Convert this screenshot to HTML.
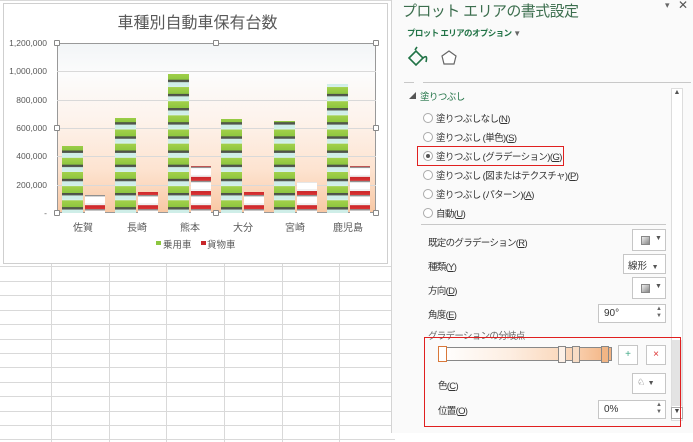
<!DOCTYPE html>
<html><head><meta charset="utf-8">
<style>
*{margin:0;padding:0;box-sizing:border-box}
body{width:693px;height:442px;overflow:hidden;background:#fff;position:relative;font-family:"Liberation Sans","Noto Sans CJK JP",sans-serif;color:#444}
.abs{position:absolute}
.hl{position:absolute;left:0;width:395px;height:1px;background:#d9d9d9}
.vl{position:absolute;top:264px;width:1px;height:178px;background:#d9d9d9}
.car{position:absolute;width:21px;background:linear-gradient(to bottom,#d6f0ec 0,#d6f0ec 12%,#a3d04a 12%,#8cc63f 60%,#4a4f45 60%,#5a5f55 76%,#cfeee8 76%) bottom/21px 14.17px repeat-y}
.trk{position:absolute;width:20px;background:linear-gradient(to bottom,#fff 0,#fff 30%,#ececec 30%,#f2f2f2 45%,#c8262a 45%,#d33 72%,#888 72%,#999 82%,#fff 82%) bottom/20px 14.17px repeat-y}
.yl{position:absolute;right:646px;font-size:8.5px;color:#595959;text-align:right}
.xl{position:absolute;top:219px;font-size:10px;color:#595959;width:54px;text-align:center}
.gl{position:absolute;left:57px;width:319px;height:1px;background:#d9d9d9}
.h{position:absolute;width:6px;height:6px;border:1px solid #888;background:#fff;border-radius:1px}
.rad{position:absolute;left:423px;width:10px;height:10px;border:1px solid #aaa;border-radius:50%;background:#fff}
.opt{position:absolute;left:436px;font-size:9.5px;letter-spacing:-0.6px;color:#333}
.lab{position:absolute;left:428px;font-size:9.5px;letter-spacing:-0.7px;color:#333}
.box{position:absolute;border:1px solid #c6c6c6;background:#fff}
</style></head><body>
<div class="hl" style="top:266px"></div><div class="hl" style="top:281px"></div><div class="hl" style="top:295px"></div><div class="hl" style="top:310px"></div><div class="hl" style="top:324px"></div><div class="hl" style="top:339px"></div><div class="hl" style="top:353px"></div><div class="hl" style="top:367px"></div><div class="hl" style="top:382px"></div><div class="hl" style="top:396px"></div><div class="hl" style="top:411px"></div><div class="hl" style="top:425px"></div><div class="hl" style="top:439px"></div>
<div class="vl" style="left:51px"></div><div class="vl" style="left:109px"></div><div class="vl" style="left:166px"></div><div class="vl" style="left:224px"></div><div class="vl" style="left:282px"></div><div class="vl" style="left:339px"></div>
<div class="abs" style="left:3px;top:3px;width:385px;height:261px;border:1px solid #cfcfcf;background:#fff"></div>
<div class="abs" style="left:0;top:0;width:395px;height:1px;background:#d9d9d9"></div>
<div class="abs" style="left:0;width:395px;text-align:center;top:9px;font-size:16px;color:#595959">車種別自動車保有台数</div>
<div class="abs" style="left:57px;top:43px;width:319px;height:170px;background:linear-gradient(to bottom,#f2f5f7 0%,#fcfcfc 18%,#fdf3ec 45%,#fde3d0 75%,#f8c8a4 100%);border:1px solid #999"></div>
<div class="gl" style="top:71px"></div><div class="gl" style="top:100px"></div><div class="gl" style="top:128px"></div><div class="gl" style="top:156px"></div><div class="gl" style="top:185px"></div>
<div class="yl" style="top:38px">1,200,000</div>
<div class="yl" style="top:66px">1,000,000</div>
<div class="yl" style="top:95px">800,000</div>
<div class="yl" style="top:123px">600,000</div>
<div class="yl" style="top:151px">400,000</div>
<div class="yl" style="top:180px">200,000</div>
<div class="yl" style="top:208px">-</div>
<div class="car" style="left:62px;top:146px;height:67px"></div><div class="trk" style="left:85px;top:195px;height:18px"></div>
<div class="car" style="left:115px;top:118px;height:95px"></div><div class="trk" style="left:138px;top:192px;height:21px"></div>
<div class="car" style="left:168px;top:74px;height:139px"></div><div class="trk" style="left:191px;top:166px;height:47px"></div>
<div class="car" style="left:221px;top:119px;height:94px"></div><div class="trk" style="left:244px;top:192px;height:21px"></div>
<div class="car" style="left:274px;top:121px;height:92px"></div><div class="trk" style="left:297px;top:182px;height:31px"></div>
<div class="car" style="left:327px;top:84px;height:129px"></div><div class="trk" style="left:350px;top:166px;height:47px"></div>
<div class="xl" style="left:56px">佐賀</div><div class="xl" style="left:110px">長崎</div><div class="xl" style="left:163px">熊本</div><div class="xl" style="left:216px">大分</div><div class="xl" style="left:268px">宮崎</div><div class="xl" style="left:321px">鹿児島</div>
<div class="abs" style="left:156px;top:241px;width:5px;height:4px;background:#8cc63f"></div>
<div class="abs" style="left:163px;top:237px;font-size:9.5px;color:#595959">乗用車</div>
<div class="abs" style="left:201px;top:241px;width:5px;height:4px;background:#c8262a"></div>
<div class="abs" style="left:207px;top:237px;font-size:9.5px;color:#595959">貨物車</div>
<div class="h" style="left:54px;top:40px"></div><div class="h" style="left:213px;top:40px"></div><div class="h" style="left:373px;top:40px"></div>
<div class="h" style="left:54px;top:125px"></div><div class="h" style="left:373px;top:125px"></div>
<div class="h" style="left:54px;top:210px"></div><div class="h" style="left:213px;top:210px"></div><div class="h" style="left:373px;top:210px"></div>
<!-- panel -->
<div class="abs" style="left:391px;top:0;width:302px;height:433px;background:#fafafa;border-left:1px solid #d4d4d4"></div>
<div class="abs" style="left:402px;top:0;font-size:15px;letter-spacing:-0.6px;color:#3c6e4e">プロット エリアの書式設定</div>
<div class="abs" style="left:665px;top:0;font-size:9px;color:#666">▾</div>
<div class="abs" style="left:678px;top:-2px;font-size:12px;color:#555">✕</div>
<div class="abs" style="left:407px;top:27px;font-size:8.5px;letter-spacing:-0.6px;color:#217346;font-weight:bold">プロット エリアのオプション <span style="color:#666;font-size:8px">▼</span></div>
<svg class="abs" style="left:406px;top:46px" width="60" height="22"><path d="M3 12 L10 5 L17 12 L10 19 Z" fill="none" stroke="#217346" stroke-width="1.6"/><path d="M9 4 L11 1 M17 12 q5 -4 3 4" stroke="#217346" stroke-width="1.6" fill="none"/><path d="M43 5 L50 10 L48 18 L38 18 L36 10 Z" fill="#fff" stroke="#666" stroke-width="1.2"/></svg>
<div class="abs" style="left:404px;top:82px;width:287px;height:1px;background:#c8c8c8"></div>
<div class="abs" style="left:414px;top:77px;width:9px;height:6px;background:#fafafa"></div>
<div class="abs" style="left:409px;top:91px;font-size:7px;color:#555">◢</div>
<div class="abs" style="left:420px;top:89px;font-size:9.5px;letter-spacing:-0.6px;color:#217346">塗りつぶし</div>
<div class="rad" style="top:113px"></div><div class="opt" style="top:111px">塗りつぶしなし(<u>N</u>)</div>
<div class="rad" style="top:132px"></div><div class="opt" style="top:130px">塗りつぶし (単色)(<u>S</u>)</div>
<div class="rad" style="top:151px"><div style="width:4px;height:4px;background:#555;border-radius:50%;margin:2px"></div></div><div class="opt" style="top:149px">塗りつぶし (グラデーション)(<u>G</u>)</div>
<div class="abs" style="left:417px;top:146px;width:147px;height:20px;border:1.5px solid #e02020"></div>
<div class="rad" style="top:170px"></div><div class="opt" style="top:168px">塗りつぶし (図またはテクスチャ)(<u>P</u>)</div>
<div class="rad" style="top:189px"></div><div class="opt" style="top:187px">塗りつぶし (パターン)(<u>A</u>)</div>
<div class="rad" style="top:208px"></div><div class="opt" style="top:206px">自動(<u>U</u>)</div>
<div class="abs" style="left:421px;top:224px;width:245px;height:1px;background:#c8c8c8"></div>
<div class="abs" style="left:671px;top:88px;width:12px;height:333px;background:#fff;border:1px solid #ddd"></div>
<div class="abs" style="left:672px;top:89px;width:10px;height:10px;font-size:7px;text-align:center;color:#555">▲</div>
<div class="abs" style="left:672px;top:340px;width:10px;height:66px;background:#e3e3e3"></div>
<div class="abs" style="left:671px;top:407px;width:12px;height:12px;border:1px solid #aaa;background:#fff;font-size:7px;text-align:center;color:#444">▼</div>
<div class="lab" style="top:235px">既定のグラデーション(<u>R</u>)</div>
<div class="box" style="left:632px;top:229px;width:34px;height:22px"><div style="position:absolute;left:8px;top:6px;width:9px;height:9px;border:1px solid #888;background:linear-gradient(135deg,#eee,#888)"></div><span style="position:absolute;left:22px;top:5px;font-size:7px;color:#555">▼</span></div>
<div class="lab" style="top:259px">種類(<u>Y</u>)</div>
<div class="box" style="left:623px;top:254px;width:43px;height:20px;font-size:9.5px;padding:3px 4px;color:#333;white-space:nowrap">線形 <span style="font-size:7px;color:#555;margin-left:2px">▼</span></div>
<div class="lab" style="top:283px">方向(<u>D</u>)</div>
<div class="box" style="left:632px;top:277px;width:34px;height:22px"><div style="position:absolute;left:8px;top:6px;width:9px;height:9px;border:1px solid #888;background:linear-gradient(135deg,#eee,#888)"></div><span style="position:absolute;left:22px;top:5px;font-size:7px;color:#555">▼</span></div>
<div class="lab" style="top:307px">角度(<u>E</u>)</div>
<div class="box" style="left:598px;top:304px;width:68px;height:19px;font-size:10px;padding:3px 5px;color:#333">90°<span style="position:absolute;right:3px;top:1px;font-size:6px;line-height:7px;color:#666">▲<br>▼</span></div>
<div class="lab" style="top:328px;color:#666">グラデーションの分岐点</div>
<div class="abs" style="left:424px;top:337px;width:257px;height:90px;border:1.5px solid #e02020"></div>
<div class="abs" style="left:440px;top:347px;width:172px;height:14px;border:1px solid #888;background:linear-gradient(to right,#fff 0%,#fdeee2 40%,#fad6b8 75%,#f3b280 100%)"></div>
<div class="abs" style="left:438px;top:346px;width:9px;height:16px;border:1.5px solid #d9783a;background:#fff"></div>
<div class="abs" style="left:558px;top:346px;width:8px;height:17px;border:1px solid #888;background:#fcf0e6"></div>
<div class="abs" style="left:572px;top:346px;width:8px;height:17px;border:1px solid #888;background:#f7dcc5"></div>
<div class="abs" style="left:601px;top:346px;width:8px;height:17px;border:1px solid #888;background:#f1b585"></div>
<div class="box" style="left:618px;top:345px;width:20px;height:20px;font-size:10px;text-align:center;color:#4a8;line-height:18px">+</div>
<div class="box" style="left:646px;top:345px;width:20px;height:20px;font-size:10px;text-align:center;color:#d33;line-height:18px">×</div>
<div class="lab" style="left:438px;top:378px">色(<u>C</u>)</div>
<div class="box" style="left:632px;top:373px;width:34px;height:21px;font-size:9px;padding:3px 4px;color:#555">♘ <span style="font-size:7px">▼</span></div>
<div class="lab" style="left:438px;top:403px">位置(<u>O</u>)</div>
<div class="box" style="left:598px;top:400px;width:68px;height:19px;font-size:10px;padding:3px 5px;color:#333">0%<span style="position:absolute;right:3px;top:1px;font-size:6px;line-height:7px;color:#666">▲<br>▼</span></div>
</body></html>
